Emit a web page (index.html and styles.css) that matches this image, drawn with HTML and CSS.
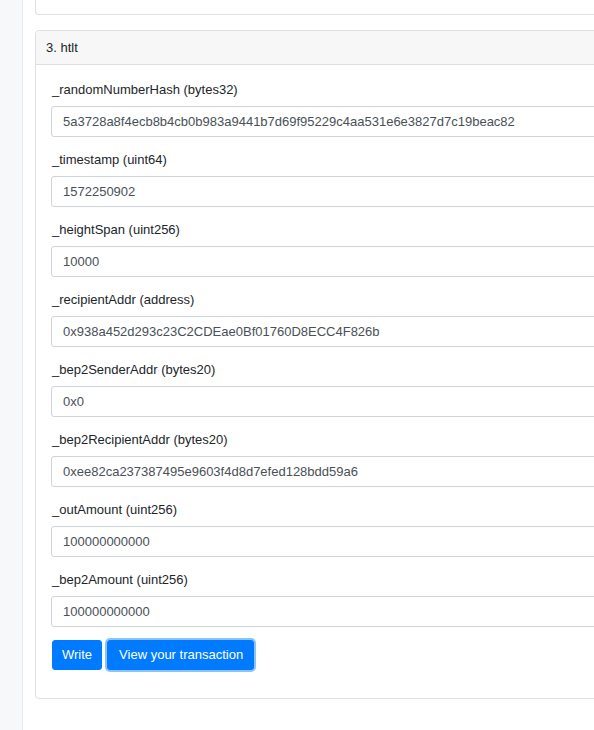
FILE: index.html
```html
<!DOCTYPE html>
<html>
<head>
<meta charset="utf-8">
<link rel="stylesheet" href="styles.css">
</head>
<body>
<div class="layout">
  <aside class="sidebar"></aside>
  <main class="main">
    <div class="card card-prev"></div>
    <div class="card">
      <div class="card-header">3. htlt</div>
      <div class="card-body">
        <div class="form-group">
          <label class="label">_randomNumberHash (bytes32)</label>
          <input class="input" type="text" value="5a3728a8f4ecb8b4cb0b983a9441b7d69f95229c4aa531e6e3827d7c19beac82">
        </div>
        <div class="form-group">
          <label class="label">_timestamp (uint64)</label>
          <input class="input" type="text" value="1572250902">
        </div>
        <div class="form-group">
          <label class="label">_heightSpan (uint256)</label>
          <input class="input" type="text" value="10000">
        </div>
        <div class="form-group">
          <label class="label">_recipientAddr (address)</label>
          <input class="input" type="text" value="0x938a452d293c23C2CDEae0Bf01760D8ECC4F826b">
        </div>
        <div class="form-group">
          <label class="label">_bep2SenderAddr (bytes20)</label>
          <input class="input" type="text" value="0x0">
        </div>
        <div class="form-group">
          <label class="label">_bep2RecipientAddr (bytes20)</label>
          <input class="input" type="text" value="0xee82ca237387495e9603f4d8d7efed128bdd59a6">
        </div>
        <div class="form-group">
          <label class="label">_outAmount (uint256)</label>
          <input class="input" type="text" value="100000000000">
        </div>
        <div class="form-group">
          <label class="label">_bep2Amount (uint256)</label>
          <input class="input" type="text" value="100000000000">
        </div>
        <div class="actions">
          <button class="btn" type="button">Write</button>
          <button class="btn btn-wide btn-focus" type="button">View your transaction</button>
        </div>
      </div>
    </div>
  </main>
</div>
</body>
</html>
```
FILE: styles.css
```css
html, body {
  margin: 0;
  padding: 0;
  overflow: hidden;
  background: #ffffff;
  font-family: "Liberation Sans", Arial, Helvetica, sans-serif;
  color: #212529;
  font-size: 13px;
}

.layout {
  display: flex;
  min-height: 730px;
}

.sidebar {
  flex: 0 0 22px;
  background: #f7f8fa;
  border-right: 1px solid #e8eaef;
}

.main {
  flex: 0 0 600px;
  padding-left: 12px;
}

.card {
  border: 1px solid #dfdfdf;
  border-radius: 4px;
  background: #fff;
  margin-bottom: 15px;
}

.card-prev {
  height: 15px;
  box-sizing: border-box;
  border-top: 0;
  border-radius: 0 0 4px 4px;
}

.card-header {
  background: #f7f7f7;
  border-bottom: 1px solid #dfdfdf;
  padding: 6px 10px;
  line-height: 21px;
  font-size: 13px;
  border-radius: 4px 4px 0 0;
}

.card-body {
  padding: 15px;
}

.form-group {
  margin-bottom: 13px;
}

.label {
  display: block;
  line-height: 20px;
  margin-bottom: 6px;
  padding-left: 1px;
}

.input {
  display: block;
  box-sizing: border-box;
  width: 100%;
  height: 31px;
  padding: 4px 11px;
  border: 1px solid #ced4da;
  border-radius: 3px;
  font-family: inherit;
  font-size: 13px;
  color: #495057;
  background: #fff;
  margin: 0;
}

.actions {
  display: flex;
  gap: 5px;
  padding-left: 1px;
  margin-bottom: 13px;
}

.btn {
  box-sizing: border-box;
  height: 30px;
  background: #007bff;
  color: #fff;
  border: 1px solid #007bff;
  border-radius: 3px;
  font-family: inherit;
  font-size: 13px;
  line-height: 20px;
  padding: 4px 9px;
  margin: 0;
}

.btn-wide {
  padding: 4px 10px 4px 11px;
}

.btn-focus {
  box-shadow: 0 0 0 2px rgba(0, 123, 255, 0.45);
}
```
